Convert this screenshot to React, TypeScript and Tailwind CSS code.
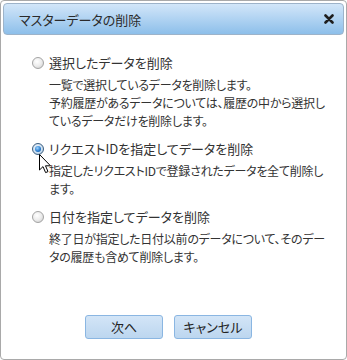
import React from "react";

const font = "font-['Meiryo_UI','Noto_Sans_CJK_JP',sans-serif] [font-feature-settings:'palt']";

function Radio({ checked }: { checked?: boolean }) {
  if (checked) {
    return (
      <span className="relative inline-flex w-[12px] h-[12px] shrink-0 rounded-full border border-[#3d5f7f] bg-[radial-gradient(circle_at_45%_40%,#ffffff_0%,#c8dcef_60%,#8fb1d1_100%)] items-center justify-center">
        <span className="w-[6px] h-[6px] rounded-full bg-[radial-gradient(circle_at_40%_35%,#9fd4ff_0%,#2b7fd1_55%,#0d4f9a_100%)]" />
      </span>
    );
  }
  return (
    <span className="inline-block w-[12px] h-[12px] shrink-0 rounded-full border border-[#a3a3a3] bg-[radial-gradient(circle_at_40%_35%,#ffffff_0%,#ececec_50%,#c9c9c9_100%)]" />
  );
}

function Option({
  checked,
  label,
  lines,
}: {
  checked?: boolean;
  label: string;
  lines: string[];
}) {
  return (
    <div className="flex flex-col">
      <div className="flex items-center gap-[5px] h-[20px]">
        <Radio checked={checked} />
        <span className="text-[13px] text-[#333] whitespace-nowrap leading-[20px]">{label}</span>
      </div>
      <div className="pl-[17px] pt-[3px] text-[12px] leading-[18px] tracking-[-0.25px] text-[#333]">
        {lines.map((l, i) => (
          <div key={i} className="whitespace-nowrap">
            {l}
          </div>
        ))}
      </div>
    </div>
  );
}

export default function App() {
  return (
    <div className={`${font} w-[347px] h-[360px] bg-white border border-[#a9a9a9] rounded-[4px] p-[2px] flex flex-col relative`}>
      <div className="h-[32px] rounded-[4px] border border-[#9db3c9] bg-gradient-to-b from-[#d2e6f9] to-[#8dbfea] flex items-center justify-between pl-[15px] pr-[9px]">
        <span className="text-[13px] text-[#2b2b2b] leading-none">マスターデータの削除</span>
        <svg width="10" height="10" viewBox="0 0 10 10">
          <path d="M1.5 1.5 L8.5 8.5 M8.5 1.5 L1.5 8.5" stroke="#1e1e1e" strokeWidth="2.6" strokeLinecap="round" />
        </svg>
      </div>

      <div className="flex flex-col pl-[29px] pt-[18px] gap-[9px]">
        <Option
          label="選択したデータを削除"
          lines={[
            "一覧で選択しているデータを削除します。",
            "予約履歴があるデータについては、履歴の中から選択し",
            "ているデータだけを削除します。",
          ]}
        />
        <Option
          checked
          label="リクエストIDを指定してデータを削除"
          lines={["指定したリクエストIDで登録されたデータを全て削除し", "ます。"]}
        />
        <Option
          label="日付を指定してデータを削除"
          lines={["終了日が指定した日付以前のデータについて、そのデー", "タの履歴も含めて削除します。"]}
        />
      </div>

      <div className="mt-auto mb-[18px] flex justify-center gap-[11px] pr-[10px]">
        <button className="w-[78px] h-[24px] rounded-[3px] border border-[#8ab6e2] bg-gradient-to-b from-[#d3e5f7] to-[#bcd6ef] text-[13px] text-[#222]">
          次へ
        </button>
        <button className="w-[78px] h-[24px] rounded-[3px] border border-[#8ab6e2] bg-gradient-to-b from-[#d3e5f7] to-[#bcd6ef] text-[13px] text-[#222]">
          キャンセル
        </button>
      </div>

      <svg className="absolute left-[38px] top-[153px]" width="13" height="20" viewBox="0 0 13 20">
        <path d="M0.5 0.5 L0.5 16 L4 12.6 L6.6 18.6 L9 17.6 L6.5 11.8 L11.5 11.8 Z" fill="#fff" stroke="#000" strokeWidth="1" strokeLinejoin="miter" />
      </svg>
    </div>
  );
}
